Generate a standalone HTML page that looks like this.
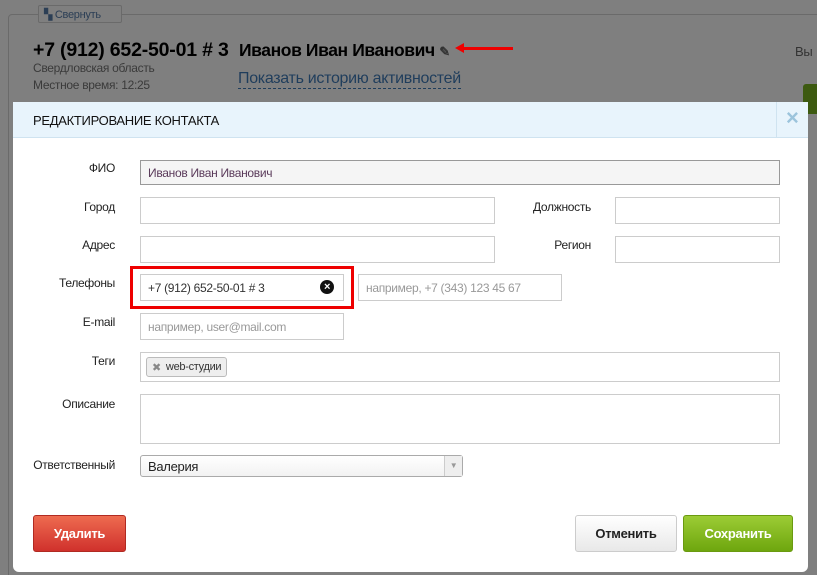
<!DOCTYPE html>
<html><head><meta charset="utf-8"><style>
*{box-sizing:border-box;margin:0;padding:0}
html,body{width:817px;height:575px;overflow:hidden}
body{background:#7f7f7f;font-family:"Liberation Sans",sans-serif;position:relative;letter-spacing:-0.3px}
.a{position:absolute}
.lbl{position:absolute;font-size:12px;color:#222;text-align:right;width:90px}
.in{position:absolute;border:1px solid #ccc;background:#fff;font-size:12px;color:#999;padding:0 7px;display:flex;align-items:center}
.btn{position:absolute;top:515px;height:37px;border-radius:3px;font-size:13px;font-weight:bold;display:flex;align-items:center;justify-content:center}
</style></head><body>
<div class="a" style="left:8px;top:14px;width:820px;height:570px;border:1px solid #6a6a6a;border-radius:4px"></div>
<div class="a" style="left:38px;top:5px;width:84px;height:18px;border:1px solid #6a6a6a;border-radius:2px;background:#7f7f7f;font-size:11px;color:#2b3e55;padding:2px 0 0 5px;white-space:nowrap">▚ Свернуть</div>
<div class="a" style="left:33px;top:39px;font-size:19.5px;font-weight:bold;color:#000;letter-spacing:-0.2px;white-space:nowrap">+7 (912) 652-50-01 # 3</div>
<div class="a" style="left:239px;top:40px;font-size:17.5px;font-weight:bold;color:#000;letter-spacing:-0.4px;white-space:nowrap">Иванов Иван Иванович <span style="font-size:13px;color:#333">✎</span></div>
<div class="a" style="left:462px;top:47px;width:51px;height:3px;background:#e00"></div>
<div class="a" style="left:455px;top:43px;width:0;height:0;border-top:5px solid transparent;border-bottom:5px solid transparent;border-right:9px solid #e00"></div>
<div class="a" style="left:33px;top:60px;font-size:12px;color:#3a3a3a;line-height:17px">Свердловская область<br>Местное время: 12:25</div>
<div class="a" style="left:238px;top:70px;font-size:16px;color:#1f3d5c;border-bottom:1px dashed #1f3d5c;line-height:18px">Показать историю активностей</div>
<div class="a" style="left:795px;top:44px;font-size:13px;color:#333">Вы</div>
<div class="a" style="left:803px;top:84px;width:20px;height:30px;background:#3d5a10;border-radius:3px"></div>

<div class="a" style="left:13px;top:102px;width:795px;height:470px;background:#fff;border-radius:0 0 6px 6px"></div>
<div class="a" style="left:13px;top:102px;width:795px;height:36px;background:#e8f4fc;border-bottom:1px solid #cfe3f0"></div>
<div class="a" style="left:776px;top:102px;width:1px;height:36px;background:#cfe3f0"></div>
<div class="a" style="left:33px;top:113px;font-size:13px;color:#111">РЕДАКТИРОВАНИЕ КОНТАКТА</div>
<div class="a" style="left:786px;top:105px;font-size:22px;color:#9cc4dc;font-weight:bold">×</div>

<div class="lbl" style="left:25px;top:161px">ФИО</div>
<div class="in" style="left:140px;top:160px;width:640px;height:25px;background:#f5f5f5;border-color:#999;color:#5a3a5a">Иванов Иван Иванович</div>
<div class="lbl" style="left:25px;top:200px">Город</div>
<div class="in" style="left:140px;top:197px;width:355px;height:27px"></div>
<div class="lbl" style="left:501px;top:200px">Должность</div>
<div class="in" style="left:615px;top:197px;width:165px;height:27px"></div>
<div class="lbl" style="left:25px;top:238px">Адрес</div>
<div class="in" style="left:140px;top:236px;width:355px;height:27px"></div>
<div class="lbl" style="left:501px;top:238px">Регион</div>
<div class="in" style="left:615px;top:236px;width:165px;height:27px"></div>
<div class="lbl" style="left:25px;top:276px">Телефоны</div>
<div class="a" style="left:130px;top:266px;width:224px;height:43px;border:3px solid #e00"></div>
<div class="in" style="left:140px;top:274px;width:204px;height:27px;color:#333">+7 (912) 652-50-01 # 3</div>
<div class="a" style="left:320px;top:280px;width:14px;height:14px;border-radius:50%;background:#111;color:#fff;font-size:11px;line-height:14px;text-align:center;font-weight:bold">×</div>
<div class="in" style="left:358px;top:274px;width:204px;height:27px">например, +7 (343) 123 45 67</div>
<div class="lbl" style="left:25px;top:315px">E-mail</div>
<div class="in" style="left:140px;top:313px;width:204px;height:27px">например, user@mail.com</div>
<div class="lbl" style="left:25px;top:354px">Теги</div>
<div class="in" style="left:140px;top:352px;width:640px;height:30px;padding:0 5px"><span style="border:1px solid #bbb;border-radius:3px;background:#eee;color:#333;font-size:11px;padding:2px 5px;height:20px;display:flex;align-items:center"><span style="color:#888;margin-right:5px">✖</span>web-студии</span></div>
<div class="lbl" style="left:25px;top:397px">Описание</div>
<div class="in" style="left:140px;top:394px;width:640px;height:50px"></div>
<div class="lbl" style="left:25px;top:458px">Ответственный</div>
<div class="in" style="left:140px;top:455px;width:323px;height:22px;border-color:#aaa;border-radius:3px;color:#222;font-size:13px;background:linear-gradient(#fff,#f2f2f2)">Валерия</div>
<div class="a" style="left:444px;top:456px;width:18px;height:20px;border-left:1px solid #ccc;background:#eee;color:#999;font-size:8px;text-align:center;line-height:20px">▼</div>

<div class="btn" style="left:33px;width:93px;background:linear-gradient(#ee6b50,#d0312c);border:1px solid #b02a22;color:#fff">Удалить</div>
<div class="btn" style="left:575px;width:102px;background:linear-gradient(#fff,#e8e8e8);border:1px solid #ccc;color:#222">Отменить</div>
<div class="btn" style="left:683px;width:110px;background:linear-gradient(#9ccc35,#6ea60e);border:1px solid #6a9a10;color:#fff">Сохранить</div>
</body></html>
